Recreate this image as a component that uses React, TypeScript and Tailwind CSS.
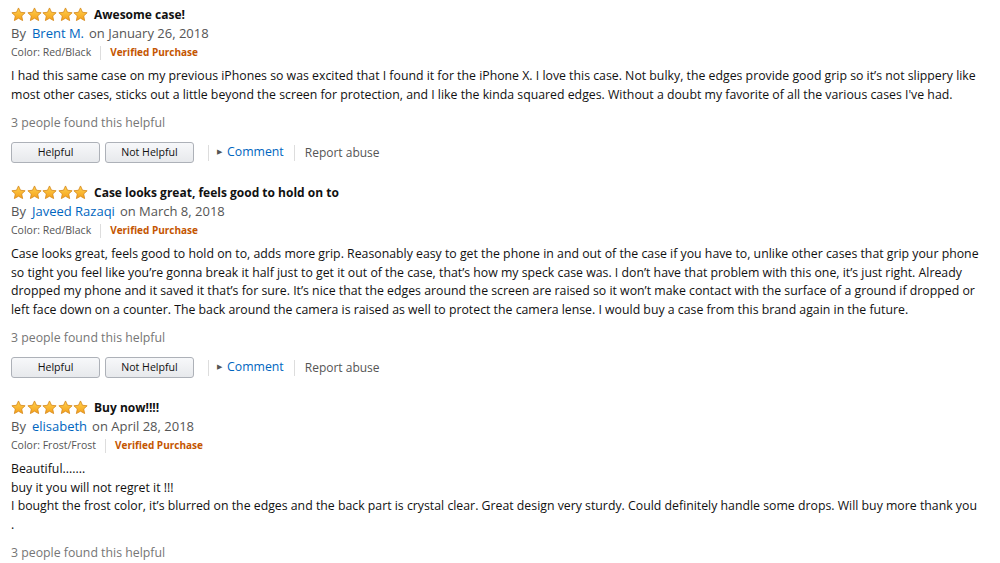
import React from "react";

type Review = {
  title: string;
  author: string;
  date: string;
  color: string;
  lines: string[];
  buttons: boolean;
};

const reviews: Review[] = [
  {
    title: "Awesome case!",
    author: "Brent M.",
    date: "January 26, 2018",
    color: "Red/Black",
    lines: [
      "I had this same case on my previous iPhones so was excited that I found it for the iPhone X. I love this case. Not bulky, the edges provide good grip so it\u2019s not slippery like",
      "most other cases, sticks out a little beyond the screen for protection, and I like the kinda squared edges. Without a doubt my favorite of all the various cases I've had.",
    ],
    buttons: true,
  },
  {
    title: "Case looks great, feels good to hold on to",
    author: "Javeed Razaqi",
    date: "March 8, 2018",
    color: "Red/Black",
    lines: [
      "Case looks great, feels good to hold on to, adds more grip. Reasonably easy to get the phone in and out of the case if you have to, unlike other cases that grip your phone",
      "so tight you feel like you\u2019re gonna break it half just to get it out of the case, that\u2019s how my speck case was. I don\u2019t have that problem with this one, it\u2019s just right. Already",
      "dropped my phone and it saved it that\u2019s for sure. It\u2019s nice that the edges around the screen are raised so it won\u2019t make contact with the surface of a ground if dropped or",
      "left face down on a counter. The back around the camera is raised as well to protect the camera lense. I would buy a case from this brand again in the future.",
    ],
    buttons: true,
  },
  {
    title: "Buy now!!!!",
    author: "elisabeth",
    date: "April 28, 2018",
    color: "Frost/Frost",
    lines: [
      "Beautiful.......",
      "buy it you will not regret it !!!",
      "I bought the frost color, it\u2019s blurred on the edges and the back part is crystal clear. Great design very sturdy. Could definitely handle some drops. Will buy more thank you",
      ".",
    ],
    buttons: false,
  },
];

function Star() {
  return (
    <svg width="15" height="15" viewBox="0 0 24 24">
      <defs>
        <linearGradient id="sg" x1="0" y1="0" x2="0" y2="1">
          <stop offset="0" stopColor="#ffd24f" />
          <stop offset="1" stopColor="#f5a01a" />
        </linearGradient>
      </defs>
      <path
        d="M12 1.5l3.2 6.9 7.4.8-5.5 5.1 1.5 7.4L12 17.9l-6.6 3.8 1.5-7.4L1.4 9.2l7.4-.8z"
        fill="url(#sg)"
        stroke="#d5871a"
        strokeWidth="1.3"
        strokeLinejoin="round"
      />
    </svg>
  );
}

function Stars() {
  return (
    <div className="flex gap-[0.5px]">
      {[0, 1, 2, 3, 4].map((i) => (
        <Star key={i} />
      ))}
    </div>
  );
}

function ReviewBlock({ r }: { r: Review }) {
  return (
    <div className="flex flex-col">
      <div className="flex items-center gap-[6px] h-[19px]">
        <Stars />
        <span className="font-bold text-[12px] text-[#111]">{r.title}</span>
      </div>
      <div className="h-[19px] flex items-center text-[13px] text-[#555]">
        <span>By</span>
        <span className="text-[#0066c0] ml-[6px] mr-[5px]">{r.author}</span>
        <span>on {r.date}</span>
      </div>
      <div className="h-[19px] flex items-center text-[10.5px] text-[#555]">
        <span>Color: {r.color}</span>
        <span className="mx-[9px] h-[14px] w-px bg-[#ddd]" />
        <span className="font-bold text-[10px] text-[#c45500]">Verified Purchase</span>
      </div>
      <div className="mt-[5px] text-[12.3px] leading-[18.5px] text-[#111] whitespace-nowrap">
        {r.lines.map((l, i) => (
          <div key={i}>{l}</div>
        ))}
      </div>
      <div className="mt-[10px] h-[19px] flex items-center text-[12.3px] text-[#767676]">
        3 people found this helpful
      </div>
      {r.buttons && (
        <div className="mt-[9px] flex items-center h-[21px] text-[10.6px] text-[#111]">
          <button className="w-[89px] h-[21px] rounded-[3px] border border-[#adb1b8] bg-gradient-to-b from-[#f7f8fa] to-[#e7e9ec]">
            Helpful
          </button>
          <button className="ml-[5px] w-[89px] h-[21px] rounded-[3px] border border-[#adb1b8] bg-gradient-to-b from-[#f7f8fa] to-[#e7e9ec]">
            Not Helpful
          </button>
          <span className="ml-[14px] h-[16px] w-px bg-[#ddd]" />
          <span className="ml-[8px] text-[7px] text-[#555]">&#9654;</span>
          <span className="ml-[5px] text-[12.3px] text-[#0066c0]">Comment</span>
          <span className="ml-[10px] h-[16px] w-px bg-[#ddd]" />
          <span className="ml-[10px] text-[12px] text-[#555]">Report abuse</span>
        </div>
      )}
    </div>
  );
}

export default function App() {
  return (
    <div
      className="w-[1000px] h-[563px] bg-white overflow-hidden pl-[11px] pt-[5px] flex flex-col gap-[20px]"
      style={{ fontFamily: '"Open Sans", "Noto Sans", sans-serif' }}
    >
      {reviews.map((r, i) => (
        <ReviewBlock key={i} r={r} />
      ))}
    </div>
  );
}
